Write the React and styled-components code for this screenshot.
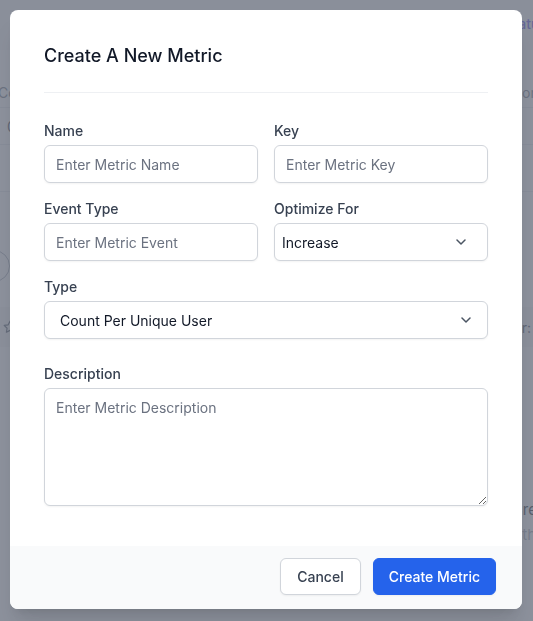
import React from 'react';
import styled, { createGlobalStyle } from 'styled-components';

const GlobalStyle = createGlobalStyle`
  html, body {
    margin: 0;
    padding: 0;
    height: 100%;
    overflow: hidden;
  }
  body {
    font-family: Inter, "Noto Sans", "Liberation Sans", sans-serif;
    -webkit-font-smoothing: antialiased;
  }
  * { box-sizing: border-box; }
`;

// ---- page behind the dialog ----
const Page = styled.div`
  width: 100%;
  height: 100vh;
  overflow: hidden;
  background: #ffffff;
  font-size: 14px;
  color: #6b7280;
`;

const TopBar = styled.div`
  height: 50px;
  display: flex;
  justify-content: flex-end;
  align-items: center;
  padding-bottom: 4px;
  background: #f3f4f6;
`;

const NavLink = styled.span`
  color: #4f46e5;
  font-weight: 500;
  margin-right: -14px;
`;

const TableRow = styled.div`
  height: ${(p) => p.$h}px;
  display: flex;
  justify-content: space-between;
  align-items: ${(p) => (p.$end ? 'flex-end' : 'center')};
  padding-bottom: ${(p) => (p.$end ? 6 : 0)}px;
  border-bottom: 1px solid #e5e7eb;
  background: ${(p) => p.$bg || 'transparent'};
`;

const Cell = styled.span`
  margin-left: ${(p) => p.$ml || 0}px;
  margin-right: ${(p) => p.$mr || 0}px;
  color: ${(p) => p.$color || '#6b7280'};
  font-weight: ${(p) => p.$weight || 400};
`;

const Gap = styled.div`
  height: ${(p) => p.$h}px;
`;

const Ring = styled.div`
  width: 32px;
  height: 32px;
  margin-left: -22px;
  border-radius: 50%;
  border: 1px solid #9ca3af;
`;

const Band = styled.div`
  height: 40px;
  display: flex;
  justify-content: space-between;
  align-items: center;
  padding: 0 0 0 3px;
  background: #f3f4f6;
`;

const Footnote = styled.div`
  display: flex;
  justify-content: flex-end;
  font-size: 15px;
  line-height: 25px;
  color: ${(p) => p.$color};
  & > span { margin-right: -26px; }
`;

// ---- dialog ----
const Overlay = styled.div`
  position: fixed;
  inset: 0;
  padding: 0 1px 2px 0;
  background: rgba(107, 114, 128, 0.78);
  display: flex;
  align-items: center;
  justify-content: center;
`;

const Dialog = styled.div`
  width: 512px;
  background: #ffffff;
  border-radius: 8px;
  overflow: hidden;
  box-shadow: 0 20px 25px -5px rgba(0, 0, 0, 0.1), 0 8px 10px -6px rgba(0, 0, 0, 0.1);
`;

const Body = styled.div`
  padding: 32px 34px 40px 34px;
`;

const Title = styled.h3`
  margin: 0;
  font-size: 18px;
  line-height: 28px;
  font-weight: 500;
  color: #111827;
`;

const Divider = styled.hr`
  margin: 22px 0 28px;
  border: 0;
  border-top: 1px solid #eef0f3;
`;

const Form = styled.div`
  display: grid;
  grid-template-columns: 1fr 1fr;
  column-gap: 16px;
  row-gap: 16px;
`;

const Field = styled.div`
  display: flex;
  flex-direction: column;
  gap: 4px;
  grid-column: ${(p) => (p.$wide ? '1 / -1' : 'auto')};
  margin-top: ${(p) => p.$mt || 0}px;
`;

const Label = styled.label`
  font-size: 14px;
  line-height: 20px;
  font-weight: 500;
  color: #374151;
`;

const Input = styled.input`
  height: 38px;
  width: 100%;
  padding: 0 11px;
  font-family: inherit;
  font-size: 14px;
  color: #111827;
  border: 1px solid #d1d5db;
  border-radius: 6px;
  box-shadow: 0 1px 2px rgba(0, 0, 0, 0.05);
  outline: none;
  &::placeholder { color: #6b7280; }
`;

const SelectWrap = styled.div`
  position: relative;
`;

const Select = styled.select`
  appearance: none;
  -webkit-appearance: none;
  height: 38px;
  width: 100%;
  padding: 0 32px 0 ${(p) => p.$pl}px;
  font-family: inherit;
  font-size: 14px;
  color: #111827;
  background: #ffffff;
  border: 1px solid #d1d5db;
  border-radius: 6px;
  box-shadow: 0 1px 2px rgba(0, 0, 0, 0.05);
  outline: none;
`;

const Chevron = styled.svg`
  position: absolute;
  top: 50%;
  right: ${(p) => p.$right}px;
  transform: translateY(-50%);
  pointer-events: none;
`;

const TextArea = styled.textarea`
  height: 118px;
  width: 100%;
  padding: 9px 11px;
  font-family: inherit;
  font-size: 14px;
  line-height: 20px;
  color: #111827;
  border: 1px solid #d1d5db;
  border-radius: 6px;
  box-shadow: 0 1px 2px rgba(0, 0, 0, 0.05);
  outline: none;
  display: block;
  &::placeholder { color: #6b7280; }
`;

const Footer = styled.div`
  display: flex;
  justify-content: flex-end;
  gap: 12px;
  padding: 12px 26px 14px;
  background: #f9fafb;
`;

const Button = styled.button`
  height: 37px;
  padding: 0 ${(p) => (p.$primary ? 15 : 16)}px;
  font-family: inherit;
  font-size: 14px;
  font-weight: 500;
  border-radius: 6px;
  cursor: pointer;
  color: ${(p) => (p.$primary ? '#ffffff' : '#374151')};
  background: ${(p) => (p.$primary ? '#2563eb' : '#ffffff')};
  border: 1px solid ${(p) => (p.$primary ? '#2563eb' : '#d1d5db')};
  box-shadow: 0 1px 2px rgba(0, 0, 0, 0.05);
`;

const Dropdown = ({ value, options, pl, right }) => (
  <SelectWrap>
    <Select $pl={pl} defaultValue={value}>
      {options.map((o) => (
        <option key={o}>{o}</option>
      ))}
    </Select>
    <Chevron $right={right} width="10" height="6" viewBox="0 0 10 6" fill="none">
      <path d="M1 1l4 4 4-4" stroke="#4b5563" strokeWidth="1.5" strokeLinecap="round" strokeLinejoin="round" />
    </Chevron>
  </SelectWrap>
);

const StarIcon = () => (
  <svg width="14" height="14" viewBox="0 0 24 24" fill="none" stroke="#4b5563" strokeWidth="2" strokeLinejoin="round">
    <path d="M12 2l3.09 6.26L22 9.27l-5 4.87 1.18 6.88L12 17.77l-6.18 3.25L7 14.14 2 9.27l6.91-1.01L12 2z" />
  </svg>
);

export default function App() {
  return (
    <>
      <GlobalStyle />
      <Page>
        <TopBar>
          <NavLink>Status</NavLink>
        </TopBar>
        <TableRow $h={58} $end>
          <Cell $ml={-2}>Count</Cell>
          <Cell $mr={-14}>Conn</Cell>
        </TableRow>
        <TableRow $h={37}>
          <Cell $ml={7} $color="#374151">0</Cell>
        </TableRow>
        <TableRow $h={47} />
        <Gap $h={58} />
        <Ring />
        <Gap $h={25} />
        <Band>
          <StarIcon />
          <Cell $mr={2} $color="#374151">Owner:</Cell>
        </Band>
        <Gap $h={150} />
        <Footnote $color="#111827"><span>Create</span></Footnote>
        <Footnote $color="#9ca3af"><span>there</span></Footnote>
      </Page>

      <Overlay>
        <Dialog>
          <Body>
            <Title>Create A New Metric</Title>
            <Divider />
            <Form>
              <Field>
                <Label>Name</Label>
                <Input placeholder="Enter Metric Name" />
              </Field>
              <Field>
                <Label>Key</Label>
                <Input placeholder="Enter Metric Key" />
              </Field>
              <Field>
                <Label>Event Type</Label>
                <Input placeholder="Enter Metric Event" />
              </Field>
              <Field>
                <Label>Optimize For</Label>
                <Dropdown value="Increase" options={['Increase', 'Decrease']} pl={7} right={22} />
              </Field>
              <Field $wide>
                <Label>Type</Label>
                <Dropdown
                  value="Count Per Unique User"
                  options={['Count Per Unique User', 'Count', 'Sum', 'Average']}
                  pl={15}
                  right={17}
                />
              </Field>
              <Field $wide $mt={9}>
                <Label>Description</Label>
                <TextArea placeholder="Enter Metric Description" />
              </Field>
            </Form>
          </Body>
          <Footer>
            <Button>Cancel</Button>
            <Button $primary>Create Metric</Button>
          </Footer>
        </Dialog>
      </Overlay>
    </>
  );
}
